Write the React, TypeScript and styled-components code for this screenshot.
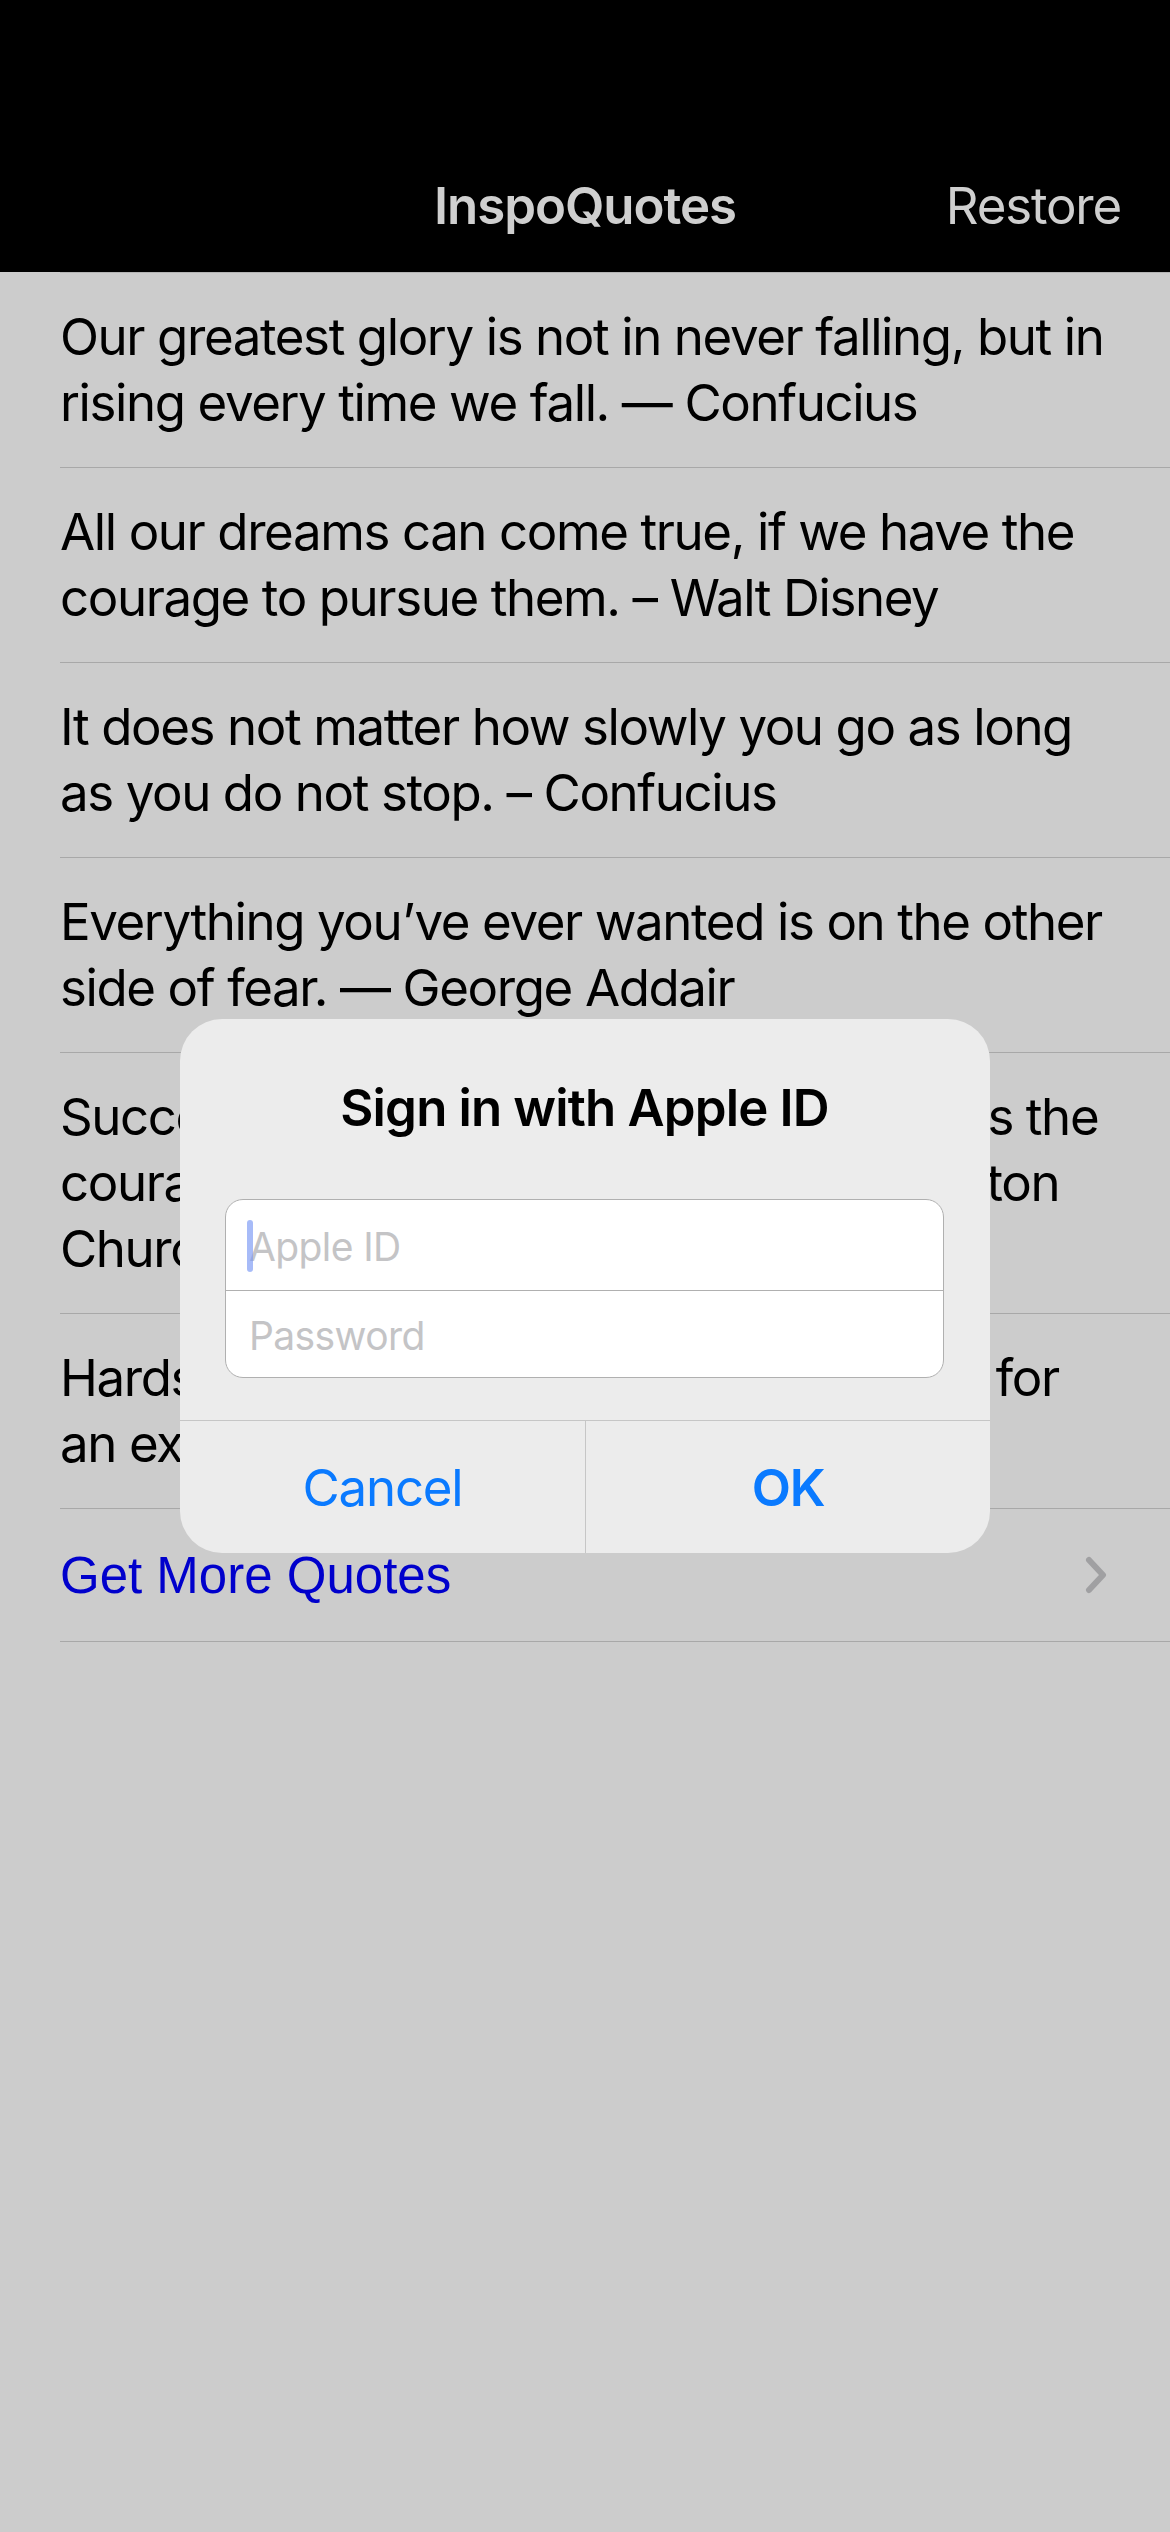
import React from "react";
import styled, { createGlobalStyle } from "styled-components";

const GlobalStyle = createGlobalStyle`
  html, body { margin: 0; padding: 0; background: #cccccc; }
  body { font-family: Inter, "Noto Sans", sans-serif; -webkit-font-smoothing: antialiased; }
  * { box-sizing: border-box; }
`;

const Screen = styled.div`
  position: relative;
  width: 1170px;
  min-height: 2532px;
  background: #cccccc;
  overflow: hidden;
`;

const NavBar = styled.header`
  height: 272px;
  background: #000000;
  display: grid;
  grid-template-columns: 1fr auto 1fr;
  align-items: start;
  padding: 175px 49px 0 49px;
`;

const NavTitle = styled.h1`
  grid-column: 2;
  margin: 0;
  font-size: 51px;
  font-weight: 600;
  line-height: 61px;
  letter-spacing: -1.05px;
  color: #cfcfcf;
`;

const NavAction = styled.button`
  grid-column: 3;
  justify-self: end;
  background: none;
  border: 0;
  padding: 0;
  font-family: inherit;
  font-size: 51px;
  font-weight: 400;
  line-height: 61px;
  letter-spacing: -1.2px;
  color: #cfcfcf;
`;

const List = styled.ul`
  list-style: none;
  margin: 0 0 0 60px;
  padding: 0;
  border-top: 1px solid #b4b4b4;
`;

const QuoteRow = styled.li`
  padding: 31px 40px 31px 0;
  border-bottom: 1px solid #a8a8a8;
  overflow: hidden;
`;

const QuoteText = styled.p`
  margin: 0;
  font-size: 51px;
  line-height: 66px;
  letter-spacing: -1.4px;
  color: #000000;
`;

const QuoteLine = styled.span`
  display: block;
  white-space: nowrap;
`;

const LinkRow = styled.li`
  height: 133px;
  display: flex;
  align-items: center;
  justify-content: space-between;
  padding-right: 63px;
  border-bottom: 1px solid #a8a8a8;
`;

const LinkText = styled.a`
  font-family: "Liberation Sans", Arial, sans-serif;
  font-size: 51px;
  color: #0000cc;
  text-decoration: none;
`;

const Chevron = styled.svg`
  width: 22px;
  height: 38px;
  display: block;
`;

const Alert = styled.div`
  position: absolute;
  top: 1019px;
  left: 180px;
  width: 810px;
  border-radius: 42px;
  background: #ececec;
  overflow: hidden;
`;

const AlertBody = styled.div`
  padding: 58px 46px 42px 45px;
`;

const AlertTitle = styled.h2`
  margin: 0 0 61px;
  text-align: center;
  font-size: 51px;
  font-weight: 600;
  line-height: 61px;
  letter-spacing: -0.85px;
  color: #000000;
`;

const FieldGroup = styled.div`
  border: 1px solid #b0b0b0;
  border-radius: 18px;
  background: #ffffff;
  overflow: hidden;
`;

const FieldWrap = styled.div<{ $h: number; $divider?: boolean }>`
  position: relative;
  height: ${(p) => p.$h}px;
  display: flex;
  align-items: center;
  border-top: ${(p) => (p.$divider ? "1px solid #b0b0b0" : "0")};
`;

const FieldInput = styled.input`
  width: 100%;
  height: 100%;
  border: 0;
  outline: none;
  background: transparent;
  padding: 3px 24px 0 23px;
  font-family: Inter, "Noto Sans", sans-serif;
  font-size: 39px;
  letter-spacing: -0.6px;
  color: #000;
  &::placeholder {
    color: #c4c4c6;
  }
`;

const Caret = styled.span`
  position: absolute;
  left: 21px;
  top: 20px;
  width: 6px;
  height: 52px;
  border-radius: 3px;
  background: rgba(120, 150, 245, 0.65);
`;

const ButtonRow = styled.div`
  display: grid;
  grid-template-columns: 1fr 1fr;
  border-top: 1px solid #c6c6c6;
`;

const AlertButton = styled.button<{ $primary?: boolean }>`
  height: 132px;
  background: none;
  border: 0;
  border-left: ${(p) => (p.$primary ? "1px solid #c6c6c6" : "0")};
  padding: 0;
  font-family: Inter, "Noto Sans", sans-serif;
  font-size: 51px;
  font-weight: ${(p) => (p.$primary ? 600 : 400)};
  letter-spacing: -1.2px;
  color: #0a7aff;
`;

const quotes: string[][] = [
  ["Our greatest glory is not in never falling, but in", "rising every time we fall. \u2014 Confucius"],
  ["All our dreams can come true, if we have the", "courage to pursue them. \u2013 Walt Disney"],
  ["It does not matter how slowly you go as long", "as you do not stop. \u2013 Confucius"],
  ["Everything you\u2019ve ever wanted is on the other", "side of fear. \u2014 George Addair"],
  [
    "Success is not final, failure is not fatal: it is the",
    "courage to continue that counts. \u2014 Winston",
    "Churchill",
  ],
  ["Hardships often prepare ordinary people for", "an extraordinary destiny. \u2013 C.S. Lewis"],
];

export default function App() {
  return (
    <Screen>
      <GlobalStyle />
      <NavBar>
        <NavTitle>InspoQuotes</NavTitle>
        <NavAction>Restore</NavAction>
      </NavBar>
      <List>
        {quotes.map((lines, i) => (
          <QuoteRow key={i}>
            <QuoteText>
              {lines.map((l, j) => (
                <QuoteLine key={j}>{l}</QuoteLine>
              ))}
            </QuoteText>
          </QuoteRow>
        ))}
        <LinkRow>
          <LinkText href="#">Get More Quotes</LinkText>
          <Chevron viewBox="0 0 22 38" fill="none">
            <path
              d="M4 4 L18 19 L4 34"
              stroke="#a0a0a2"
              strokeWidth="6"
              strokeLinecap="round"
              strokeLinejoin="round"
            />
          </Chevron>
        </LinkRow>
      </List>
      <Alert role="dialog">
        <AlertBody>
          <AlertTitle>Sign in with Apple ID</AlertTitle>
          <FieldGroup>
            <FieldWrap $h={90}>
              <Caret />
              <FieldInput placeholder="Apple ID" readOnly />
            </FieldWrap>
            <FieldWrap $h={87} $divider>
              <FieldInput placeholder="Password" type="password" readOnly />
            </FieldWrap>
          </FieldGroup>
        </AlertBody>
        <ButtonRow>
          <AlertButton>Cancel</AlertButton>
          <AlertButton $primary>OK</AlertButton>
        </ButtonRow>
      </Alert>
    </Screen>
  );
}
